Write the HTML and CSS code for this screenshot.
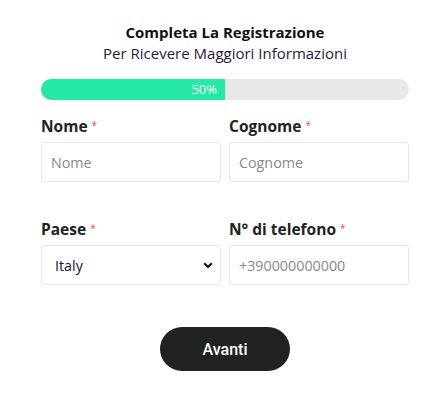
FILE: index.html
```html
<!DOCTYPE html>
<html lang="it">
<head>
<meta charset="utf-8">
<link rel="stylesheet" href="styles.css">
</head>
<body>
<div class="page">
  <div class="form">
    <h1 class="title">Completa La Registrazione</h1>
    <p class="subtitle">Per Ricevere Maggiori Informazioni</p>
    <div class="progress"><div class="progress-fill" style="width:50%">50%</div></div>
    <div class="grid">
      <div class="field">
        <label class="label">Nome <span class="req">*</span></label>
        <input class="input" type="text" placeholder="Nome">
      </div>
      <div class="field">
        <label class="label">Cognome <span class="req">*</span></label>
        <input class="input" type="text" placeholder="Cognome">
      </div>
      <div class="field">
        <label class="label">Paese <span class="req">*</span></label>
        <div class="select-wrap">
          <select class="input select"><option>Italy</option></select>
          <svg class="chevron" width="10" height="7" viewBox="0 0 10 7"><path d="M1.2 1.2 L5 5 L8.8 1.2" fill="none" stroke="#111" stroke-width="2.2"/></svg>
        </div>
      </div>
      <div class="field">
        <label class="label">N° di telefono <span class="req">*</span></label>
        <input class="input" type="text" placeholder="+390000000000">
      </div>
    </div>
    <div class="actions"><button class="btn">Avanti</button></div>
  </div>
</div>
</body>
</html>
```
FILE: styles.css
```css
* { box-sizing: border-box; }
html, body { margin: 0; padding: 0; background: #fff; }
body { font-family: "Open Sans", "Liberation Sans", sans-serif; color: #222; }
.page { padding: 22px 27px 0 41px; }
.form { width: 368px; display: flex; flex-direction: column; }
.title { margin: 0; font-size: 15px; font-weight: 700; line-height: 21px; text-align: center; color: #111; }
.subtitle { margin: 0; font-size: 15px; font-weight: 400; line-height: 21px; text-align: center; color: #2a1a3a; }
.progress { margin-top: 15px; height: 21px; border-radius: 11px; background: #e8e8e8; overflow: hidden; }
.progress-fill { height: 100%; background: #24eaa6; color: #fff; font-size: 13px; line-height: 21px; text-align: right; padding-right: 8px; }
.grid { margin-top: 16px; display: grid; grid-template-columns: 1fr 1fr; column-gap: 8px; row-gap: 37px; }
.field { display: flex; flex-direction: column; gap: 6px; }
.label { display: block; height: 20px; font-size: 15.5px; font-weight: 700; line-height: 20px; color: #222; }
.req { color: #d9534f; font-size: 10px; font-weight: 400; line-height: 0; vertical-align: 3px; }
.input { width: 100%; height: 40px; border: 1px solid #e6e6e6; border-radius: 3px; padding: 0 9px; font-family: "Open Sans", "Liberation Sans", sans-serif; font-size: 14.3px; color: #222; background: #fff; outline: none; }
.input::placeholder { color: #8a8a8a; }
.select-wrap { position: relative; }
.select { appearance: none; -webkit-appearance: none; padding-left: 13px; color: #1a1030; }
.chevron { position: absolute; right: 8px; top: 17px; pointer-events: none; }
.actions { margin-top: 42px; display: flex; justify-content: center; }
.btn { width: 130px; height: 44px; border: none; border-radius: 22px; background: #222; color: #fff; font-family: Roboto, "Liberation Sans", sans-serif; font-size: 16px; font-weight: 500; }
```
